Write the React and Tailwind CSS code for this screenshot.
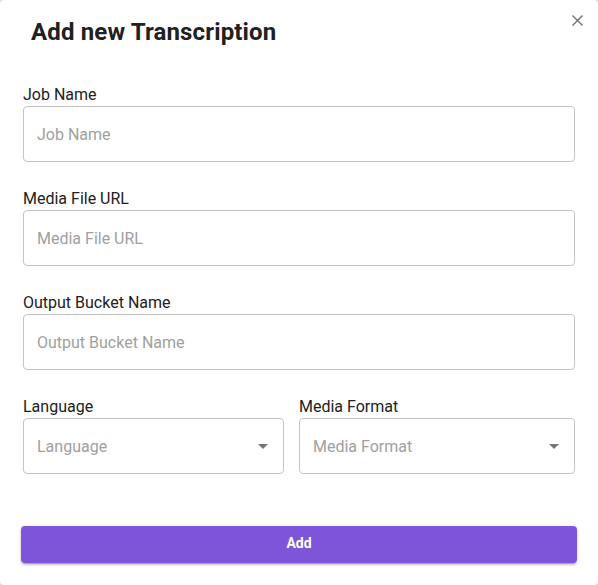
import { useState } from "react";

function Field({ label, placeholder }) {
  const [value, setValue] = useState("");
  return (
    <div className="flex flex-col">
      <label className="text-base leading-5 text-[#212121] h-[21px]">{label}</label>
      <input
        value={value}
        onChange={(e) => setValue(e.target.value)}
        placeholder={placeholder}
        className="h-[56px] w-full rounded-[4px] border border-[#c4c4c4] bg-white pl-[13px] pr-3 text-base text-[#212121] placeholder:text-[#a0a0a0] outline-none"
      />
    </div>
  );
}

function SelectField({ label, placeholder }) {
  return (
    <div className="flex flex-col">
      <label className="text-base leading-5 text-[#212121] h-[21px]">{label}</label>
      <div className="relative flex h-[56px] w-full items-center rounded-[4px] border border-[#c4c4c4] bg-white pl-[13px] pt-[1px] text-base text-[#a0a0a0]">
        {placeholder}
        <svg
          className="absolute right-[8px] top-1/2 -translate-y-1/2"
          width="24"
          height="24"
          viewBox="0 0 24 24"
        >
          <path d="M7 10l5 5 5-5z" fill="#757575" />
        </svg>
      </div>
    </div>
  );
}

export default function App() {
  return (
    <div className="w-[598px] h-[585px] bg-[#d6d6d6] font-['Roboto',sans-serif]">
      <div className="relative h-full w-full rounded-[4px] bg-white px-[23px]">
        <button className="absolute right-[15px] top-[15px]">
          <svg width="11" height="11" viewBox="0 0 11 11">
            <path d="M0.5 0.5L10.5 10.5M10.5 0.5L0.5 10.5" stroke="#6f6f6f" strokeWidth="1.4" />
          </svg>
        </button>

        <h2 className="pt-[16px] pl-[8px] text-2xl leading-8 font-bold tracking-[0.15px] text-[#212121]">
          Add new Transcription
        </h2>

        <div className="mt-[37px] flex flex-col gap-[27px]">
          <Field label="Job Name" placeholder="Job Name" />
          <Field label="Media File URL" placeholder="Media File URL" />
          <Field label="Output Bucket Name" placeholder="Output Bucket Name" />
          <div className="grid grid-cols-[261px_1fr] gap-[15px]">
            <SelectField label="Language" placeholder="Language" />
            <SelectField label="Media Format" placeholder="Media Format" />
          </div>
        </div>

        <button className="mt-[52px] -mx-[2px] h-[37px] w-[556px] rounded-[4px] bg-[#7e55d8] pb-[3px] text-sm font-bold text-white shadow-[0_3px_1px_-2px_rgba(0,0,0,0.2),0_2px_2px_0_rgba(0,0,0,0.14),0_1px_5px_0_rgba(0,0,0,0.12)]">
          Add
        </button>
      </div>
    </div>
  );
}
